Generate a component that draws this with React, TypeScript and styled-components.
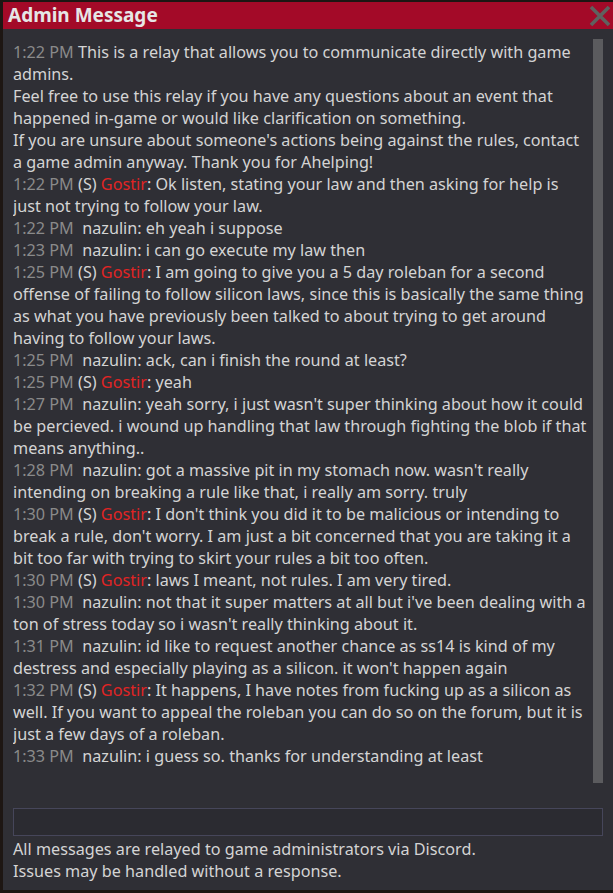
import React from "react";
import styled, { createGlobalStyle } from "styled-components";

const GlobalStyle = createGlobalStyle`
  html, body { margin: 0; padding: 0; }
  body {
    background: #1d1613;
    font-family: "Noto Sans", "DejaVu Sans", sans-serif;
    overflow: hidden;
  }
`;

const Window = styled.div`
  margin: 2px 0 0 3px;
  width: 610px;
  height: 888px;
  display: flex;
  flex-direction: column;
  background: #2f2f35;
`;

const TitleBar = styled.div`
  height: 27px;
  flex: none;
  display: flex;
  align-items: center;
  justify-content: space-between;
  background: #a30a28;
  padding: 0 2px 0 5px;
`;

const Title = styled.div`
  font-family: "Noto Sans", sans-serif;
  font-weight: 700;
  font-size: 19px;
  line-height: 27px;
  color: #e6e6e6;
`;

const CloseIcon = styled.svg`
  width: 22px;
  height: 22px;
  display: block;
`;

const Body = styled.div`
  flex: 1;
  display: flex;
  flex-direction: column;
  padding: 10px 10px 0 10px;
  min-height: 0;
`;

const LogRow = styled.div`
  display: flex;
  gap: 3px;
  height: 745px;
  flex: none;
`;

const Log = styled.div`
  flex: 1;
  padding-top: 2px;
  font-size: 16.2px;
  line-height: 22px;
  color: #d4d4d4;
  overflow: hidden;
`;

const Entry = styled.div`
  white-space: pre-wrap;
`;

const Time = styled.span`
  color: #8a8a8a;
`;

const Name = styled.span`
  color: #e02424;
`;

const ScrollTrack = styled.div`
  width: 10px;
  flex: none;
  display: flex;
  flex-direction: column;
`;

const ScrollThumb = styled.div`
  height: 744px;
  background: #5b5b5e;
`;

const Input = styled.div`
  margin-top: 24px;
  height: 26px;
  border: 1px solid #46465a;
  background: #2b2b31;
  flex: none;
`;

const Footer = styled.div`
  margin-top: 2px;
  font-size: 16.2px;
  line-height: 22px;
  color: #d4d4d4;
`;

type Msg = { time: string; admin?: boolean; name?: string; text: string };

const messages: Msg[] = [
  {
    time: "1:22 PM",
    text:
      "This is a relay that allows you to communicate directly with game admins.\nFeel free to use this relay if you have any questions about an event that happened in-game or would like clarification on something.\nIf you are unsure about someone's actions being against the rules, contact a game admin anyway. Thank you for Ahelping!",
  },
  { time: "1:22 PM", admin: true, name: "Gostir", text: "Ok listen, stating your law and then asking for help is just not trying to follow your law." },
  { time: "1:22 PM", name: "nazulin", text: "eh yeah i suppose" },
  { time: "1:23 PM", name: "nazulin", text: "i can go execute my law then" },
  {
    time: "1:25 PM",
    admin: true,
    name: "Gostir",
    text:
      "I am going to give you a 5 day roleban for a second offense of failing to follow silicon laws, since this is basically the same thing as what you have previously been talked to about trying to get around having to follow your laws.",
  },
  { time: "1:25 PM", name: "nazulin", text: "ack, can i finish the round at least?" },
  { time: "1:25 PM", admin: true, name: "Gostir", text: "yeah" },
  {
    time: "1:27 PM",
    name: "nazulin",
    text:
      "yeah sorry, i just wasn't super thinking about how it could be percieved. i wound up handling that law through fighting the blob if that means anything..",
  },
  {
    time: "1:28 PM",
    name: "nazulin",
    text: "got a massive pit in my stomach now. wasn't really intending on breaking a rule like that, i really am sorry. truly",
  },
  {
    time: "1:30 PM",
    admin: true,
    name: "Gostir",
    text:
      "I don't think you did it to be malicious or intending to break a rule, don't worry. I am just a bit concerned that you are taking it a bit too far with trying to skirt your rules a bit too often.",
  },
  { time: "1:30 PM", admin: true, name: "Gostir", text: "laws I meant, not rules. I am very tired." },
  {
    time: "1:30 PM",
    name: "nazulin",
    text:
      "not that it super matters at all but i've been dealing with a ton of stress today so i wasn't really thinking about it.",
  },
  {
    time: "1:31 PM",
    name: "nazulin",
    text:
      "id like to request another chance as ss14 is kind of my destress and especially playing as a silicon. it won't happen again",
  },
  {
    time: "1:32 PM",
    admin: true,
    name: "Gostir",
    text:
      "It happens, I have notes from fucking up as a silicon as well. If you want to appeal the roleban you can do so on the forum, but it is just a few days of a roleban.",
  },
  { time: "1:33 PM", name: "nazulin", text: "i guess so. thanks for understanding at least" },
];

function Message({ m }: { m: Msg }) {
  if (!m.name) {
    return (
      <Entry>
        <Time>{m.time}</Time> {m.text}
      </Entry>
    );
  }
  if (m.admin) {
    return (
      <Entry>
        <Time>{m.time}</Time> (S) <Name>{m.name}</Name>: {m.text}
      </Entry>
    );
  }
  return (
    <Entry>
      <Time>{m.time}</Time>{"  "}
      {m.name}: {m.text}
    </Entry>
  );
}

export default function App() {
  return (
    <>
      <GlobalStyle />
      <Window>
        <TitleBar>
          <Title>Admin Message</Title>
          <CloseIcon viewBox="0 0 22 22">
            <path d="M2 2 L20 20 M20 2 L2 20" stroke="#5f615f" strokeWidth="3.6" strokeLinecap="butt" />
          </CloseIcon>
        </TitleBar>
        <Body>
          <LogRow>
            <Log>
              {messages.map((m, i) => (
                <Message key={i} m={m} />
              ))}
            </Log>
            <ScrollTrack>
              <ScrollThumb />
            </ScrollTrack>
          </LogRow>
          <Input />
          <Footer>
            All messages are relayed to game administrators via Discord.
            <br />
            Issues may be handled without a response.
          </Footer>
        </Body>
      </Window>
    </>
  );
}
